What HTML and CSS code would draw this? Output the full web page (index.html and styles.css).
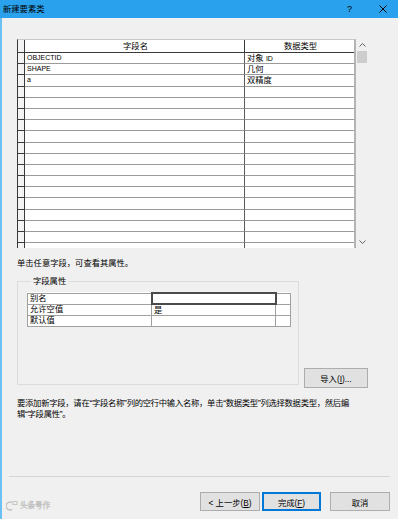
FILE: index.html
```html
<html lang="zh-CN"><head>
  <meta charset="UTF-8">
  <title>新建要素类</title>
  <link rel="stylesheet" href="styles.css">
</head>
<body>
  <div class="titlebar">
    <span class="title">新建要素类</span>
    <span class="help">?</span>
    <svg class="close" width="8" height="8" viewBox="0 0 8 8"><path d="M0.5 0.5 L7.5 7.5 M7.5 0.5 L0.5 7.5" stroke="#000" stroke-width="1" fill="none"/></svg>
  </div>

  <div class="client">
    <div class="content">
      <div class="grid-wrap">
        <div class="grid">
          <div class="row head">
            <div class="sel"></div>
            <div class="cell c1 center">字段名</div>
            <div class="cell c2 center">数据类型</div>
          </div>
          <div class="row"><div class="sel"></div><div class="cell c1 latin">OBJECTID</div><div class="cell c2">对象 <span class="latin">ID</span></div></div>
          <div class="row"><div class="sel"></div><div class="cell c1 latin">SHAPE</div><div class="cell c2">几何</div></div>
          <div class="row"><div class="sel"></div><div class="cell c1 latin">a</div><div class="cell c2">双精度</div></div>
          <div class="row"><div class="sel"></div><div class="cell c1"></div><div class="cell c2"></div></div>
          <div class="row"><div class="sel"></div><div class="cell c1"></div><div class="cell c2"></div></div>
          <div class="row"><div class="sel"></div><div class="cell c1"></div><div class="cell c2"></div></div>
          <div class="row"><div class="sel"></div><div class="cell c1"></div><div class="cell c2"></div></div>
          <div class="row"><div class="sel"></div><div class="cell c1"></div><div class="cell c2"></div></div>
          <div class="row"><div class="sel"></div><div class="cell c1"></div><div class="cell c2"></div></div>
          <div class="row"><div class="sel"></div><div class="cell c1"></div><div class="cell c2"></div></div>
          <div class="row"><div class="sel"></div><div class="cell c1"></div><div class="cell c2"></div></div>
          <div class="row"><div class="sel"></div><div class="cell c1"></div><div class="cell c2"></div></div>
          <div class="row"><div class="sel"></div><div class="cell c1"></div><div class="cell c2"></div></div>
          <div class="row"><div class="sel"></div><div class="cell c1"></div><div class="cell c2"></div></div>
          <div class="row"><div class="sel"></div><div class="cell c1"></div><div class="cell c2"></div></div>
          <div class="row"><div class="sel"></div><div class="cell c1"></div><div class="cell c2"></div></div>
          <div class="row"><div class="sel"></div><div class="cell c1"></div><div class="cell c2"></div></div>
          <div class="row"><div class="sel"></div><div class="cell c1"></div><div class="cell c2"></div></div>
        </div>
        <div class="vscroll">
          <div class="arrow">
            <svg width="7" height="4" viewBox="0 0 7 4"><path d="M0.5 3.5 L3.5 0.5 L6.5 3.5" stroke="#606060" fill="none"/></svg>
          </div>
          <div class="thumb"></div>
          <div class="track"></div>
          <div class="arrow">
            <svg width="7" height="4" viewBox="0 0 7 4"><path d="M0.5 0.5 L3.5 3.5 L6.5 0.5" stroke="#606060" fill="none"/></svg>
          </div>
        </div>
      </div>

      <p class="hint">单击任意字段，可查看其属性。</p>

      <div class="props-row">
        <fieldset class="props">
          <legend>字段属性</legend>
          <table class="props-table">
            <tr><td class="name">别名</td><td class="value editing"></td><td class="extra"></td></tr>
            <tr><td class="name">允许空值</td><td class="value">是</td><td class="extra"></td></tr>
            <tr><td class="name">默认值</td><td class="value"></td><td class="extra"></td></tr>
          </table>
        </fieldset>
        <button class="btn import">导入(<u>I</u>)...</button>
      </div>

      <p class="note">要添加新字段，请在“字段名称”列的空行中输入名称，单击“数据类型”列选择数据类型，然后编<br>辑“字段属性”。</p>
    </div>

    <div class="footer">
      <div class="separator"></div>
      <div class="actions">
        <div class="watermark">
          <svg width="12" height="10" viewBox="0 0 12 10"><path d="M6 1.5 A4 4 0 1 0 6 8.5" stroke="#c4c4c4" stroke-width="1.5" fill="none"/><rect x="7" y="0.5" width="4" height="3" stroke="#c4c4c4" fill="none"/></svg>
          <span>头条号作</span>
        </div>
        <button class="btn">&lt; 上一步(<u>B</u>)</button>
        <button class="btn default">完成(<u>F</u>)</button>
        <button class="btn cancel">取消</button>
      </div>
    </div>
  </div>
</body></html>
```

FILE: styles.css
```css
* {
  box-sizing: border-box;
}

body {
  margin: 0;
  width: 398px;
  height: 519px;
  background: #f0f0f0;
  font-family: "Liberation Sans", "Noto Sans CJK SC", sans-serif;
  font-size: 8.3px;
  color: #000;
  display: flex;
  flex-direction: column;
  overflow: hidden;
}

.latin {
  font-family: "Liberation Sans", Arial, sans-serif;
  font-size: 7px;
}

/* title bar */
.titlebar {
  height: 18px;
  background: #2aa1ec;
  display: flex;
  align-items: center;
  padding: 0 0 0 3px;
}

.titlebar .title {
  line-height: 18px;
  flex: 1;
}

.titlebar .help {
  font-size: 9px;
  margin-right: 27px;
}

.titlebar .close {
  margin-right: 11px;
}

.client {
  flex: 1;
  display: flex;
  flex-direction: column;
  border-left: 2px solid #6cc0f2;
}

.content {
  padding-left: 15px;
}

/* field grid */
.grid-wrap {
  display: flex;
  margin-top: 21px;
  height: 209px;
}

.grid {
  width: 339px;
  border-left: 1px solid #3a3a3a;
  border-top: 1px solid #c8c8c8;
  border-right: 2px solid #b4b4b4;
  background: #fff;
  overflow: hidden;
}

.row {
  display: flex;
  height: 11.2px;
}

.row.head {
  height: 13px;
}

.sel {
  width: 7px;
  border-right: 1px solid #3a3a3a;
  border-bottom: 1px solid #3a3a3a;
  background: #f4f4f4;
}

.cell {
  border-bottom: 1px solid #9a9a9a;
  line-height: 10px;
  padding-left: 2px;
  white-space: nowrap;
}

.c1 {
  width: 220px;
  border-right: 1px solid #5a5a5a;
}

.c2 {
  flex: 1;
}

.head .cell {
  border-bottom-color: #3a3a3a;
  line-height: 12px;
}

.head .c1 {
  border-right-color: #3a3a3a;
}

.center {
  text-align: center;
}

.vscroll {
  width: 12px;
  display: flex;
  flex-direction: column;
}

.vscroll .arrow {
  height: 12px;
  display: flex;
  align-items: center;
  justify-content: center;
}

.vscroll .thumb {
  height: 12px;
  margin: 0 1px;
  background: #cdcdcd;
}

.vscroll .track {
  flex: 1;
}

.hint {
  margin: 9px 0 0 0;
  line-height: 12px;
}

/* field properties */
.props-row {
  display: flex;
  margin-top: 6px;
}

.props {
  margin: 0;
  width: 282px;
  height: 110px;
  padding: 5px 0 0 9px;
  border: 1px solid #dcdcdc;
}

.props legend {
  margin-left: 4px;
  padding: 0 2px;
  line-height: 12px;
}

.props-table {
  border-collapse: collapse;
  table-layout: fixed;
  width: 263px;
  background: #fff;
  font-size: 8.3px;
}

.props-table td {
  border: 1px solid #a0a0a0;
  height: 11.2px;
  padding: 0 0 0 2px;
  line-height: 9px;
}

.props-table .name {
  width: 124px;
}

.props-table .value {
  width: 124px;
}

.props-table .extra {
  width: 15px;
}

.props-table .editing {
  border: 2px solid #4a4a4a;
}

.btn {
  font-family: inherit;
  font-size: 8.3px;
  height: 19px;
  width: 60px;
  padding: 0;
  border: 1px solid #adadad;
  background: #e1e1e1;
  color: #000;
}

.btn.import {
  align-self: flex-end;
  margin: 0 0 -3px 5px;
  width: 64px;
  height: 20px;
}

.note {
  margin: 13px 0 0 0;
  line-height: 11px;
  white-space: nowrap;
  letter-spacing: -0.25px;
}

/* footer buttons */
.footer {
  margin-top: auto;
  padding: 0 8px 8px 7px;
}

.separator {
  border-top: 1px solid #d5d5d5;
}

.actions {
  display: flex;
  margin-top: 15px;
}

.actions .btn + .btn {
  margin-left: 2px;
}

.actions .btn.cancel {
  margin-left: 9px;
}

.btn.default {
  width: 59px;
  border-color: #0078d7;
  box-shadow: inset 0 0 0 1px #0078d7;
}

.watermark {
  margin-right: auto;
  margin-left: -3px;
  align-self: flex-end;
  display: flex;
  align-items: center;
  gap: 2px;
  color: #d0d0d0;
  font-size: 7.5px;
  line-height: 10px;
  -webkit-text-stroke: 0.3px #b8b8b8;
}
```
